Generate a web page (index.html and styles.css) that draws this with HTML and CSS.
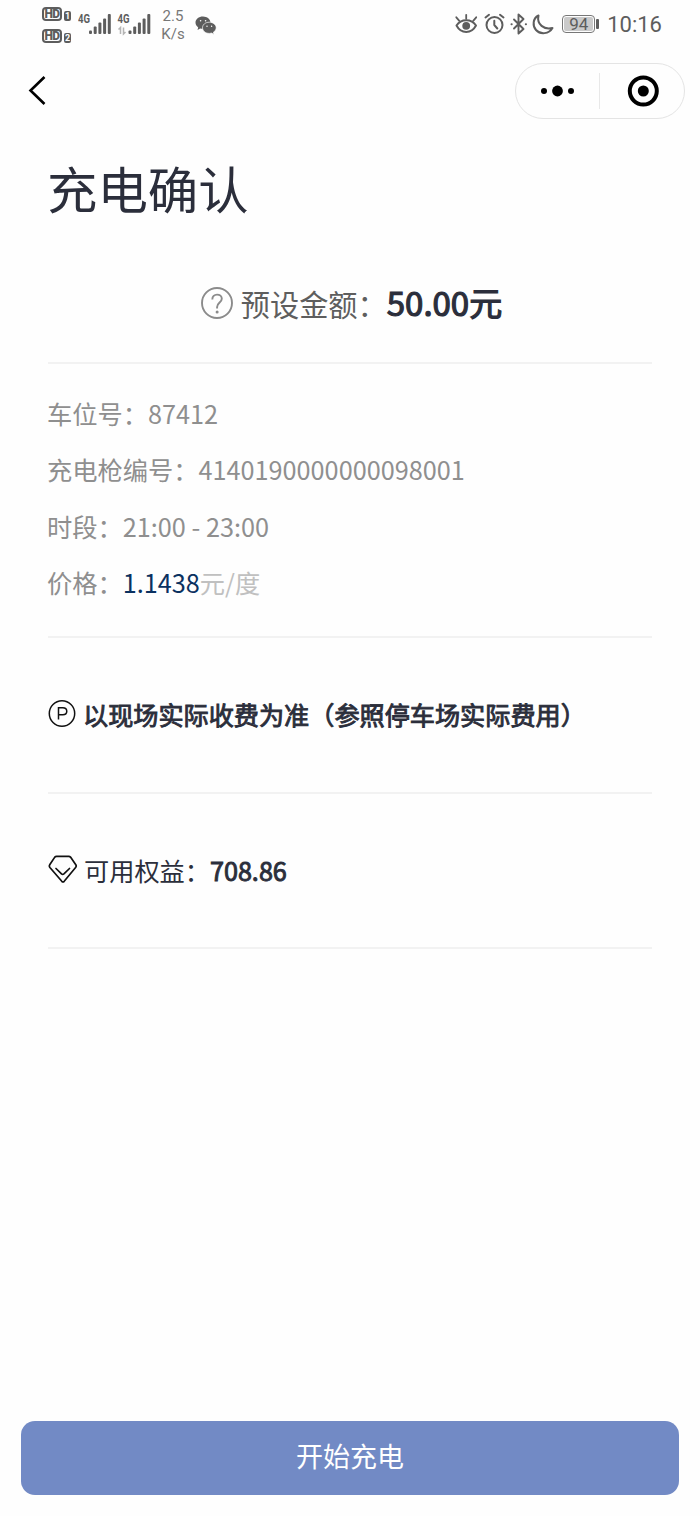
FILE: index.html
```html
<!DOCTYPE html>
<html lang="zh-CN">
<head>
<meta charset="utf-8">
<title>充电确认</title>
<link rel="stylesheet" href="styles.css">
</head>
<body>
<div class="page">
  <header class="status">
    <div class="hd-stack">
      <div class="hd-row"><span class="hd">HD</span><span class="sim">1</span></div>
      <div class="hd-row"><span class="hd">HD</span><span class="sim">2</span></div>
    </div>
    <svg class="signals" width="74" height="26" viewBox="0 0 74 26">
      <g fill="#5d5d5d">
        <text class="net" x="0" y="11" textLength="12" lengthAdjust="spacingAndGlyphs">4G</text>
        <rect x="11" y="18.5" width="3" height="3.5" rx="1"/><rect x="15.7" y="14.5" width="3" height="7.5" rx="1"/><rect x="20.4" y="10.5" width="3" height="11.5" rx="1"/><rect x="25.1" y="6.5" width="3" height="15.5" rx="1"/><rect x="29.8" y="2" width="3" height="20" rx="1"/>
        <text class="net" x="39.5" y="11" textLength="12" lengthAdjust="spacingAndGlyphs">4G</text>
        <rect x="50.5" y="18.5" width="3" height="3.5" rx="1"/><rect x="55.2" y="14.5" width="3" height="7.5" rx="1"/><rect x="59.9" y="10.5" width="3" height="11.5" rx="1"/><rect x="64.6" y="6.5" width="3" height="15.5" rx="1"/><rect x="69.3" y="2" width="3" height="20" rx="1"/>
      </g>
      <path d="M40.5 17.5l2-2v6.5M45.5 15.500v6.500l2-2" fill="none" stroke="#b5b5b5" stroke-width="1.500"/>
    </svg>
    <div class="speed"><span>2.5</span><span>K/s</span></div>
    <svg class="wechat" width="22" height="19" viewBox="0 0 22 19">
      <path d="M8 .5C3.700.500.500 3.200.500 6.600c0 2 1 3.600 2.700 4.800L2.500 14l2.700-1.500c1 .300 2 .400 3 .400 4.200-.1 7.300-2.800 7.300-6.200S12.200.500 8 .500z" fill="#5d5d5d"/>
      <path d="M14.300 6.200c-3.900 0-6.800 2.500-6.800 5.600s2.900 5.600 6.800 5.600c.8 0 1.600-.1 2.300-.3l2.400 1.300-.6-2.200c1.700-1.100 2.800-2.600 2.800-4.400 0-3.100-3.100-5.600-6.900-5.600z" fill="#5d5d5d" stroke="#fff" stroke-width=".7"/>
      <g fill="#fff"><circle cx="5.600" cy="4.800" r=".8"/><circle cx="10.600" cy="4.800" r=".8"/><circle cx="12" cy="10.200" r=".7"/><circle cx="16.600" cy="10.200" r=".7"/></g>
    </svg>
    <div class="status-right">
      <svg width="99" height="22" viewBox="0 0 99 22" fill="none" stroke="#5d5d5d" stroke-width="2" stroke-linecap="round" stroke-linejoin="round">
        <path d="M1.500 12.500C6 5.500 16.500 5.500 21 12.500C16.500 21 6 21 1.500 12.500z"/><circle cx="11.200" cy="12.800" r="3.900" fill="#5d5d5d" stroke="none"/>
        <path d="M1.300 4.300l3 3.500M11.200 1.800v4M21.200 4.300l-3 3.500" stroke-width="1.800"/>
        <circle cx="39.500" cy="12" r="8"/><path d="M39.300 7.700V12l3 3.500M30.500 4.500l3.500-2.700M48.500 4.500L45 1.800"/>
        <path d="M59 6.500l9.500 9.500-5 4.500v-19l5 4.500-9.500 9.500" stroke-width="1.900"/><path d="M56.500 11.200h.2M70.800 11.200h.2"/>
        <path d="M83.500 2.500C77.500 5.500 77.500 13 81 17c4.500 5 13 4 16.500-2C89 17 81.500 11.500 83.500 2.500z"/>
      </svg>
      <div class="battery"><span class="level">94</span></div><i class="battery-tip"></i>
      <time>10:16</time>
    </div>
  </header>

  <nav class="navbar">
    <svg class="back" width="20" height="32" viewBox="0 0 20 32"><path d="M16.500 2L2.500 15.500L16.500 29" fill="none" stroke="#000" stroke-width="2.600"/></svg>
    <div class="capsule">
      <svg width="34" height="12" viewBox="0 0 34 12"><circle cx="3" cy="6" r="3"/><circle cx="16.500" cy="6" r="5.400"/><circle cx="30" cy="6" r="3"/></svg>
      <i class="split"></i>
      <svg width="32" height="32" viewBox="0 0 32 32"><circle cx="16.300" cy="16" r="13.500" fill="none" stroke="#000" stroke-width="4"/><circle cx="16.300" cy="16" r="5.500"/></svg>
    </div>
  </nav>

  <main class="content">
    <h1 class="title">充电确认</h1>
    <section class="amount">
      <svg width="32" height="32" viewBox="0 0 32 32" fill="none" stroke="#8b8b8b" stroke-width="1.900"><circle cx="16" cy="16" r="15"/><path d="M11.300 12.400C11.300 9.500 13.300 7.600 16 7.600c2.800 0 4.800 1.800 4.800 4.200 0 3.600-4.700 4-4.700 8.200v1.500"/><circle cx="16.100" cy="25" r="1.500" fill="#8b8b8b" stroke="none"/></svg>
      <span class="amount-label">预设金额：</span><span class="amount-value">50.00元</span>
    </section>
    <section class="details">
      <p>车位号：87412</p>
      <p>充电枪编号：4140190000000098001</p>
      <p>时段：21:00 - 23:00</p>
      <p>价格：<span class="price">1.1438</span><span class="unit">元/度</span></p>
    </section>
    <section class="row">
      <svg width="28" height="28" viewBox="0 0 28 28" fill="none" stroke="#111" stroke-width="1.500"><circle cx="14" cy="13.500" r="12.700"/><path d="M10.500 19.500V7.800h4.300c5.300 0 5.300 7 0 7h-4.300"/></svg>
      <span class="notice">以现场实际收费为准（参照停车场实际费用）</span>
    </section>
    <section class="row benefits">
      <svg width="30" height="30" viewBox="0 0 30 30" fill="none" stroke="#111" stroke-width="1.700" stroke-linejoin="round" stroke-linecap="round"><path d="M8.500 1.300h12.300q1 0 1.700.8l5.300 7.700q.9 1.400-.2 2.700L16.200 26.300q-1.200 1.200-2.400 0L1.900 12.500q-1-1.300-.2-2.700L6.800 2.100q.7-.8 1.700-.8z"/><path d="M8 13.500l5.500 5.400q1.200 1.100 2.400 0l5.600-5.400"/></svg>
      <span>可用权益：<span class="benefit-value">708.86</span></span>
    </section>
  </main>

  <button class="start" type="button">开始充电</button>
</div>
</body>
</html>
```
FILE: styles.css
```css
* { box-sizing: border-box; }
body {
  margin: 0;
  background: #fefefe;
  color: #2b2e3b;
  font-family: "Noto Sans CJK SC", sans-serif;
}
h1, p { margin: 0; font-weight: 400; }
svg { display: block; flex: none; }
i { display: block; }

.page { display: flex; flex-direction: column; width: 700px; height: 1516px; }

.status {
  display: flex;
  height: 50px;
  padding: 0 39px 0 42px;
  color: #5d5d5d;
  font-family: Roboto, sans-serif;
}
.hd-stack { display: flex; flex-direction: column; gap: 8px; width: 36px; padding-top: 7px; }
.hd-row { display: flex; align-items: flex-end; gap: 2px; height: 14px; }
.hd {
  width: 20px; height: 14px;
  border: 2px solid #5d5d5d; border-radius: 4px;
  font-size: 12px; line-height: 10.5px; font-weight: 900; text-align: center;
  letter-spacing: -.5px;
}
.sim {
  width: 7px; height: 10px;
  border-radius: 2px;
  background: #5d5d5d; color: #fff;
  font-size: 9px; line-height: 10px; font-weight: 700; text-align: center;
}
.signals { margin-top: 12px; }
.net { font-size: 12.5px; font-weight: 700; }
.speed {
  display: flex; flex-direction: column;
  width: 32px; margin-left: 5px; padding-top: 8px;
  align-items: center;
  color: #777; font-size: 15px; line-height: 17.5px;
}
.wechat { margin: 16px 0 0 6px; }
.status-right { display: flex; align-items: center; height: 48px; margin-left: auto; }
.battery {
  width: 33px; height: 18px; margin-left: 8px; padding: 1px;
  border: 1.5px solid #777; border-radius: 4px;
}
.level {
  display: block; height: 14px;
  border-radius: 2px; background: #cacaca;
  font-size: 17px; line-height: 14px; text-align: center;
}
.battery-tip { width: 3px; height: 10px; margin-left: 1px; border-radius: 1px; background: #5d5d5d; }
time { margin-left: 8px; margin-right: -1px; padding-top: 2px; font-size: 22px; line-height: 26px; }

.navbar {
  display: flex; align-items: center; justify-content: space-between;
  height: 82px; padding: 0 15px 0 28px;
}
.capsule {
  display: flex; align-items: center;
  width: 170px; height: 56px; padding: 0 25px;
  border: 1px solid #e4e4e4; border-radius: 28px;
}
.split { width: 1px; height: 36px; margin-left: 24px; margin-right: 27px; background: #e8e8e8; }

.content { flex: 1; padding: 22px 48px 0; }
.title { height: 70px; margin-left: -1px; font-size: 50.4px; line-height: 67px; }
.amount {
  display: flex; align-items: center; justify-content: center;
  height: 140px; padding: 20px 0 0 3px;
  border-bottom: 2px solid #f2f2f2;
}
.amount-label { margin-left: 8px; font-size: 29.2px; color: #5e5e5e; }
.amount-value { font-size: 33px; line-height: 46px; margin-bottom: 2px; -webkit-text-stroke: 1.2px #2b2e3b; }
.details {
  height: 274px; padding-top: 21px;
  border-bottom: 2px solid #f2f2f2;
  color: #8f8f8f; font-size: 25.25px; line-height: 56.4px;
}
.details p { margin-left: -1px; }
.price { color: #0a3160; }
.unit { color: #c0c0c0; }
.row {
  display: flex; align-items: center; gap: 7px;
  height: 155.5px; padding-bottom: 1px;
  border-bottom: 2px solid #f2f2f2;
  font-size: 25.2px; white-space: nowrap;
}
.notice, .benefit-value { -webkit-text-stroke: .9px #2b2e3b; }
.notice { font-size: 25.15px; }
.benefits { gap: 6px; }

.start {
  height: 74px; margin: 0 21px 21px; padding: 0 0 5px;
  border: 0; border-radius: 14px;
  background: #728ac5; color: #fff;
  font-family: inherit; font-size: 27px;
}
```
